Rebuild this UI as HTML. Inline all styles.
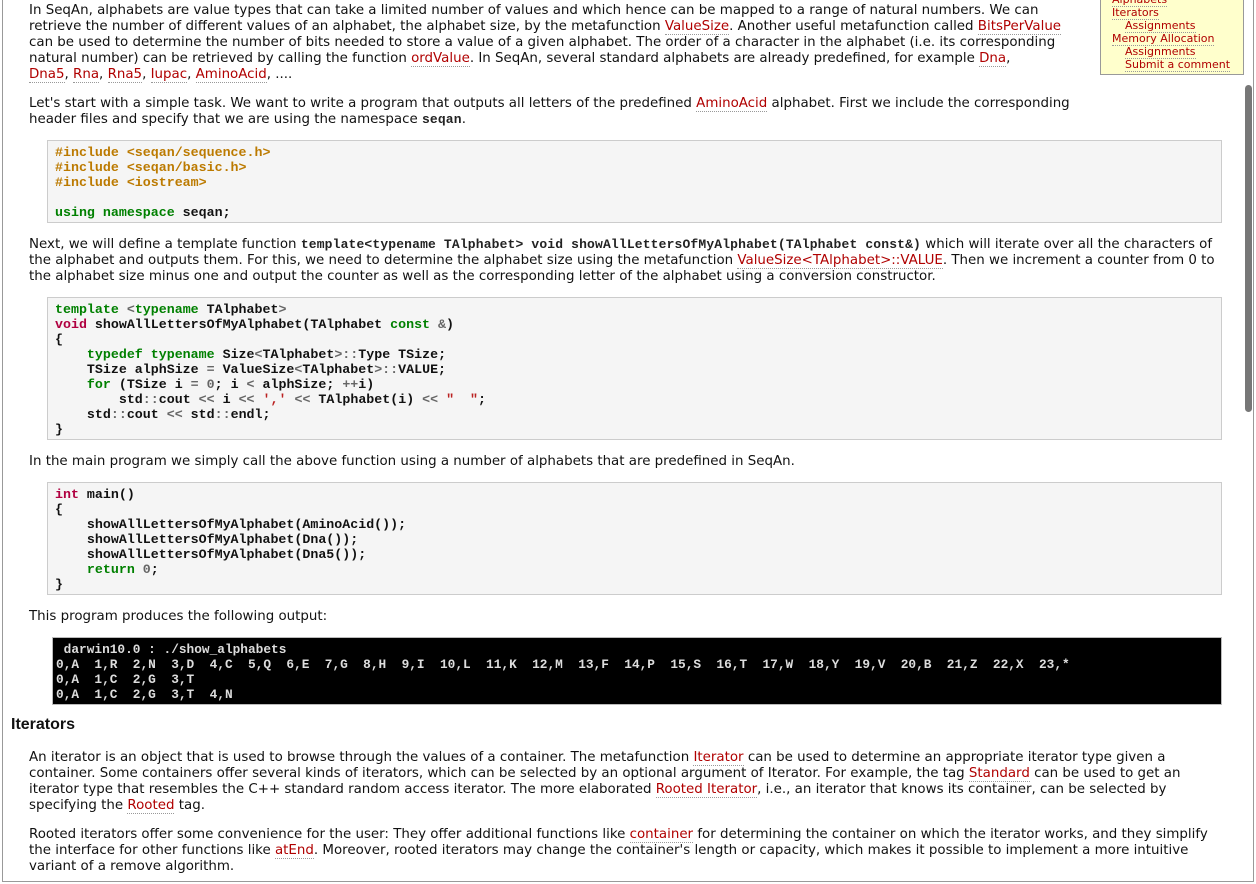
<!DOCTYPE html>
<html><head><meta charset="utf-8"><style>
html,body{margin:0;padding:0;width:1256px;height:884px;overflow:hidden;background:#fff}
body{position:relative;font-family:"DejaVu Sans","Liberation Sans",sans-serif;font-size:13.4px;color:#111}
.frame{position:absolute;left:2px;top:-2px;width:1252px;height:884px;border:1px solid #999;box-sizing:border-box}
.p{position:absolute;left:29px;line-height:16px;white-space:nowrap}
a{color:#b00000;text-decoration:none;border-bottom:1px dotted #999}
code.i{font-family:"Liberation Mono",monospace;font-size:13px;font-weight:bold;color:#222;letter-spacing:0.15px}
.code{position:absolute;left:47px;width:1175px;background:#f5f5f5;border:1px solid #ccc;box-sizing:border-box;font-family:"Liberation Mono",monospace;font-weight:bold;font-size:13.3px;line-height:15px;padding:4px 7px;white-space:pre;color:#111}
.k{color:#008000;font-weight:bold}
.t{color:#b00040}
.pp{color:#bc7a00}
.s{color:#ba2121}
.o{color:#666}
.term{position:absolute;left:52px;top:637px;width:1170px;height:68px;background:#000;color:#ddd;border:1px solid #bbb;box-sizing:border-box;font-family:"Liberation Mono",monospace;font-weight:bold;font-size:12.8px;line-height:15px;padding:4px 3px;white-space:pre}
h3{position:absolute;left:11px;top:716px;margin:0;font-family:"Liberation Sans",sans-serif;font-size:16px;font-weight:bold;color:#111}
.side{position:absolute;left:1100px;top:-10px;width:144px;height:85px;background:#ffffcc;border:1px solid #999;box-sizing:border-box;font-size:11px;line-height:13px;padding:2px 0 0 11px}
.side div{white-space:nowrap}
.sb{position:absolute;left:1245px;top:85px;width:7px;height:327px;background:#777;border-radius:4px}
</style></head><body>
<div class="frame"></div>
<div class="p" style="top:3px">In SeqAn, alphabets are value types that can take a limited number of values and which hence can be mapped to a range of natural numbers. We can<br>retrieve the number of different values of an alphabet, the alphabet size, by the metafunction <a>ValueSize</a>. Another useful metafunction called <a>BitsPerValue</a><br>can be used to determine the number of bits needed to store a value of a given alphabet. The order of a character in the alphabet (i.e. its corresponding<br>natural number) can be retrieved by calling the function <a>ordValue</a>. In SeqAn, several standard alphabets are already predefined, for example <a>Dna</a>,<br><a>Dna5</a>, <a>Rna</a>, <a>Rna5</a>, <a>Iupac</a>, <a>AminoAcid</a>, ....</div>
<div class="p" style="top:96px">Let's start with a simple task. We want to write a program that outputs all letters of the predefined <a>AminoAcid</a> alphabet. First we include the corresponding<br>header files and specify that we are using the namespace <code class="i">seqan</code>.</div>
<div class="code" style="top:140px;height:83px"><span class="pp">#include &lt;seqan/sequence.h&gt;
#include &lt;seqan/basic.h&gt;
#include &lt;iostream&gt;</span>

<span class="k">using namespace</span> seqan;</div>
<div class="p" style="top:237px">Next, we will define a template function <code class="i">template&lt;typename TAlphabet&gt; void showAllLettersOfMyAlphabet(TAlphabet const&amp;)</code> which will iterate over all the characters of<br>the alphabet and outputs them. For this, we need to determine the alphabet size using the metafunction <a>ValueSize&lt;TAlphabet&gt;::VALUE</a>. Then we increment a counter from 0 to<br>the alphabet size minus one and output the counter as well as the corresponding letter of the alphabet using a conversion constructor.</div>
<div class="code" style="top:297px;height:143px"><span class="k">template</span> <span class="o">&lt;</span><span class="k">typename</span> TAlphabet<span class="o">&gt;</span>
<span class="t">void</span> showAllLettersOfMyAlphabet(TAlphabet <span class="k">const</span> <span class="o">&amp;</span>)
{
    <span class="k">typedef</span> <span class="k">typename</span> Size<span class="o">&lt;</span>TAlphabet<span class="o">&gt;::</span>Type TSize;
    TSize alphSize <span class="o">=</span> ValueSize<span class="o">&lt;</span>TAlphabet<span class="o">&gt;::</span>VALUE;
    <span class="k">for</span> (TSize i <span class="o">=</span> <span class="o">0</span>; i <span class="o">&lt;</span> alphSize; <span class="o">++</span>i)
        std<span class="o">::</span>cout <span class="o">&lt;&lt;</span> i <span class="o">&lt;&lt;</span> <span class="s">','</span> <span class="o">&lt;&lt;</span> TAlphabet(i) <span class="o">&lt;&lt;</span> <span class="s">"  "</span>;
    std<span class="o">::</span>cout <span class="o">&lt;&lt;</span> std<span class="o">::</span>endl;
}</div>
<div class="p" style="top:454px">In the main program we simply call the above function using a number of alphabets that are predefined in SeqAn.</div>
<div class="code" style="top:482px;height:113px"><span class="t">int</span> main()
{
    showAllLettersOfMyAlphabet(AminoAcid());
    showAllLettersOfMyAlphabet(Dna());
    showAllLettersOfMyAlphabet(Dna5());
    <span class="k">return</span> <span class="o">0</span>;
}</div>
<div class="p" style="top:609px">This program produces the following output:</div>
<div class="term"> darwin10.0 : ./show_alphabets
0,A  1,R  2,N  3,D  4,C  5,Q  6,E  7,G  8,H  9,I  10,L  11,K  12,M  13,F  14,P  15,S  16,T  17,W  18,Y  19,V  20,B  21,Z  22,X  23,*
0,A  1,C  2,G  3,T
0,A  1,C  2,G  3,T  4,N</div>
<h3>Iterators</h3>
<div class="p" style="top:750px">An iterator is an object that is used to browse through the values of a container. The metafunction <a>Iterator</a> can be used to determine an appropriate iterator type given a<br>container. Some containers offer several kinds of iterators, which can be selected by an optional argument of Iterator. For example, the tag <a>Standard</a> can be used to get an<br>iterator type that resembles the C++ standard random access iterator. The more elaborated <a>Rooted Iterator</a>, i.e., an iterator that knows its container, can be selected by<br>specifying the <a>Rooted</a> tag.</div>
<div class="p" style="top:827px">Rooted iterators offer some convenience for the user: They offer additional functions like <a>container</a> for determining the container on which the iterator works, and they simplify<br>the interface for other functions like <a>atEnd</a>. Moreover, rooted iterators may change the container's length or capacity, which makes it possible to implement a more intuitive<br>variant of a remove algorithm.</div>
<div class="side">
<div><a>Alphabets</a></div>
<div><a>Iterators</a></div>
<div style="padding-left:13px"><a>Assignments</a></div>
<div><a>Memory Allocation</a></div>
<div style="padding-left:13px"><a>Assignments</a></div>
<div style="padding-left:13px"><a>Submit a comment</a></div>
</div>
<div class="sb"></div>
</body></html>
